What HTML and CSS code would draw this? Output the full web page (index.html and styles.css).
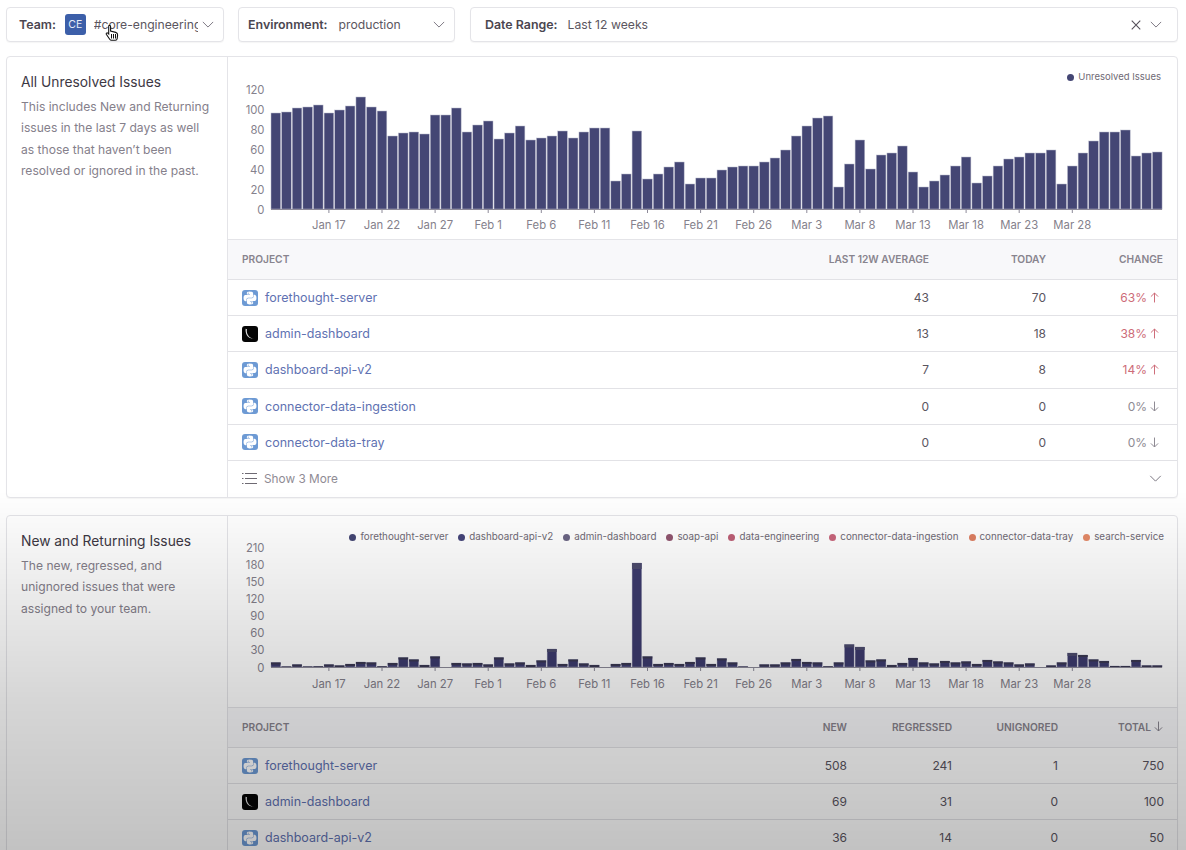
FILE: index.html
```html
<!DOCTYPE html>
<html lang="en">
<head>
<meta charset="utf-8">
<title>Team Insights</title>
<link rel="stylesheet" href="styles.css">
</head>
<body>
<svg class="defs" width="0" height="0" aria-hidden="true">
  <symbol id="chev" viewBox="0 0 14 8"><path d="M1 1l6 6 6-6" fill="none" stroke="currentColor" stroke-width="1.1"/></symbol>
  <symbol id="up" viewBox="0 0 10 12"><path d="M5 11.500V1M1 5l4-4 4 4" fill="none" stroke="currentColor" stroke-width="1.100"/></symbol>
  <symbol id="down" viewBox="0 0 10 12"><path d="M5 .5V11M1 7l4 4 4-4" fill="none" stroke="currentColor" stroke-width="1.100"/></symbol>
  <symbol id="py" viewBox="0 0 24 24">
    <rect width="24" height="24" rx="4.500" fill="#6d9ad4"/>
    <g transform="translate(2.400 2.400) scale(.8)">
      <path fill="#fff" d="M14.250.18l.9.2.73.26.59.3.45.32.34.34.25.34.16.33.1.3.04.26.02.2-.01.13V8.500l-.05.63-.13.55-.21.46-.26.38-.3.31-.33.25-.35.19-.35.14-.33.1-.3.07-.26.04-.21.02H8.770l-.69.05-.59.14-.5.22-.41.27-.33.32-.27.35-.2.36-.15.37-.1.35-.07.32-.04.27-.02.21v3.060H3.170l-.21-.03-.28-.07-.32-.12-.35-.18-.36-.26-.36-.36-.35-.46-.32-.59-.28-.73-.21-.88-.14-1.050-.05-1.230.06-1.220.16-1.040.24-.87.32-.71.36-.57.4-.44.42-.33.42-.24.4-.16.36-.1.32-.05.24-.01h.16l.06.01h8.160v-.83H6.180l-.01-2.750-.02-.37.05-.34.11-.31.17-.28.25-.26.31-.23.38-.2.44-.18.51-.15.58-.12.64-.1.71-.06.77-.04.84-.02 1.270.05zm-6.300 1.980l-.23.33-.08.41.08.41.23.34.33.22.41.09.41-.09.33-.22.23-.34.08-.41-.08-.41-.23-.33-.33-.22-.41-.09-.41.09zm13.090 3.950l.28.06.32.12.35.18.36.27.36.35.35.47.32.59.28.73.21.88.14 1.040.05 1.230-.06 1.230-.16 1.040-.24.86-.32.71-.36.57-.4.45-.42.33-.42.24-.4.16-.36.09-.32.05-.24.02-.16-.01h-8.220v.82h5.840l.01 2.760.02.36-.05.34-.11.31-.17.29-.25.25-.31.24-.38.2-.44.17-.51.15-.58.13-.64.09-.71.07-.77.04-.84.01-1.270-.04-1.070-.14-.9-.2-.73-.25-.59-.3-.45-.33-.34-.34-.25-.34-.16-.33-.1-.3-.04-.25-.02-.2.01-.13v-5.340l.05-.64.13-.54.21-.46.26-.38.3-.32.33-.24.35-.2.35-.14.33-.1.3-.06.26-.04.21-.02.13-.01h5.840l.69-.05.59-.14.5-.21.41-.28.33-.32.27-.35.2-.36.15-.36.1-.35.07-.32.04-.28.02-.21V6.070h2.090l.14.01zm-6.470 14.250l-.23.33-.08.41.08.41.23.33.33.23.41.08.41-.08.33-.23.23-.33.08-.41-.08-.41-.23-.33-.33-.23-.41-.08-.41.08z"/>
    </g>
  </symbol>
  <symbol id="nx" viewBox="0 0 16 16">
    <rect width="16" height="16" rx="3" fill="#050505"/>
    <path d="M3.600 2.800c-.2 2.300.2 4.400 1.100 6.200 1.100 2.200 3.400 3.800 7.800 3.900-3.400-.6-5.400-1.800-6.500-4C5 7.300 4.500 5.200 5 3.200z" fill="#e4e4e4"/>
  </symbol>
</svg>

<main class="page">
  <div class="filters">
    <div class="filter filter-team">
      <span class="filter-label">Team:</span>
      <span class="badge">CE</span>
      <span class="filter-value clip">#core-engineering</span>
      <svg class="chev"><use href="#chev"/></svg>
    </div>
    <div class="filter filter-env">
      <span class="filter-label">Environment:</span>
      <span class="filter-value grow">production</span>
      <svg class="chev"><use href="#chev"/></svg>
    </div>
    <div class="filter filter-date">
      <span class="filter-label">Date Range:</span>
      <span class="filter-value grow">Last 12 weeks</span>
      <svg class="close" viewBox="0 0 11 11"><path d="M.8.8l9.400 9.400M10.200.8L.8 10.200" fill="none" stroke="currentColor" stroke-width="1.200"/></svg>
      <svg class="chev"><use href="#chev"/></svg>
    </div>
  </div>

  <section class="panel panel-one">
    <aside class="side">
      <h2>All Unresolved Issues</h2>
      <p>This includes New and Returning issues in the last 7 days as well as those that haven’t been resolved or ignored in the past.</p>
    </aside>
    <div class="body">
      <div class="chart chart-one">
        <div class="legend">
          <span class="key"><i class="dot c0"></i>Unresolved Issues</span>
        </div>
        <svg class="plot" id="plot-one" width="950" height="163"></svg>
      </div>
      <div class="table table-change">
        <div class="row head"><span>Project</span><span>Last 12w Average</span><span>Today</span><span>Change</span></div>
        <div class="row"><a class="project"><svg class="pi"><use href="#py"/></svg>forethought-server</a><span>43</span><span>70</span><span class="change bad">63%<svg class="arrow"><use href="#up"/></svg></span></div>
        <div class="row"><a class="project"><svg class="pi"><use href="#nx"/></svg>admin-dashboard</a><span>13</span><span>18</span><span class="change bad">38%<svg class="arrow"><use href="#up"/></svg></span></div>
        <div class="row"><a class="project"><svg class="pi"><use href="#py"/></svg>dashboard-api-v2</a><span>7</span><span>8</span><span class="change bad">14%<svg class="arrow"><use href="#up"/></svg></span></div>
        <div class="row"><a class="project"><svg class="pi"><use href="#py"/></svg>connector-data-ingestion</a><span>0</span><span>0</span><span class="change">0%<svg class="arrow"><use href="#down"/></svg></span></div>
        <div class="row"><a class="project"><svg class="pi"><use href="#py"/></svg>connector-data-tray</a><span>0</span><span>0</span><span class="change">0%<svg class="arrow"><use href="#down"/></svg></span></div>
        <div class="more">
          <svg class="list" viewBox="0 0 15 13"><path d="M3 1.500h12M3 6.500h12M3 11.500h12M0 1.500h1.500M0 6.500h1.500M0 11.500h1.500" fill="none" stroke="currentColor" stroke-width="1"/></svg>
          <span class="more-text">Show 3 More</span>
          <svg class="chev"><use href="#chev"/></svg>
        </div>
      </div>
    </div>
  </section>

  <section class="panel panel-two">
    <aside class="side">
      <h2>New and Returning Issues</h2>
      <p>The new, regressed, and unignored issues that were assigned to your team.</p>
    </aside>
    <div class="body">
      <div class="chart chart-two">
        <div class="legend">
          <span class="key"><i class="dot c1"></i>forethought-server</span>
          <span class="key"><i class="dot c2"></i>dashboard-api-v2</span>
          <span class="key"><i class="dot c3"></i>admin-dashboard</span>
          <span class="key"><i class="dot c4"></i>soap-api</span>
          <span class="key"><i class="dot c5"></i>data-engineering</span>
          <span class="key"><i class="dot c6"></i>connector-data-ingestion</span>
          <span class="key"><i class="dot c7"></i>connector-data-tray</span>
          <span class="key"><i class="dot c8"></i>search-service</span>
        </div>
        <svg class="plot" id="plot-two" width="950" height="171"></svg>
      </div>
      <div class="table table-totals">
        <div class="row head"><span>Project</span><span>New</span><span>Regressed</span><span>Unignored</span><span class="total">Total<svg class="arrow"><use href="#down"/></svg></span></div>
        <div class="row"><a class="project"><svg class="pi"><use href="#py"/></svg>forethought-server</a><span>508</span><span>241</span><span>1</span><span>750</span></div>
        <div class="row"><a class="project"><svg class="pi"><use href="#nx"/></svg>admin-dashboard</a><span>69</span><span>31</span><span>0</span><span>100</span></div>
        <div class="row"><a class="project"><svg class="pi"><use href="#py"/></svg>dashboard-api-v2</a><span>36</span><span>14</span><span>0</span><span>50</span></div>
      </div>
    </div>
  </section>
</main>

<div class="fade"></div>

<svg class="cursor" viewBox="0 0 14 18" aria-hidden="true">
  <path d="M4.200 1.200c.9 0 1.400.6 1.400 1.500v4.400l5.100 1.300c1.300.4 2 1.200 1.900 2.500l-.4 3.600c-.1 1-.8 1.800-1.900 1.800H6.500c-.8 0-1.300-.3-1.800-1L1.300 10.200c-.5-.8.600-1.900 1.500-1.100l.9.900V2.700c0-.9.100-1.500.5-1.500z" fill="#fff" stroke="#111" stroke-width="1.100"/>
  <path d="M6.500 10v4.500M8.500 10v4.500M10.500 10v4.500" stroke="#111" stroke-width="1"/>
</svg>

<script src="charts.js"></script>
</body>
</html>
```
FILE: styles.css
```css
* { box-sizing: border-box; }
html, body { margin: 0; height: 850px; overflow: hidden; background: #fff; }
body {
  font-family: Inter, "Noto Sans", "Liberation Sans", sans-serif;
  font-size: 12.5px;
  color: #4a4452;
}
.defs { position: absolute; }

.page { padding: 7px 8px 0 6px; display: flex; flex-direction: column; }

.filters { display: flex; gap: 14px; margin-bottom: 14px; }
.filter {
  height: 35px;
  display: flex;
  align-items: center;
  border: 1px solid #e4e4e8;
  border-radius: 4px;
  box-shadow: 0 1px 1px rgba(0,0,0,.04);
  background: #fff;
  padding: 0 9px 0 12px;
}
.filter-team { width: 218px; }
.filter-env { width: 217px; padding-left: 9px; }
.filter-date { flex: 1; margin-left: 1px; padding-left: 14px; padding-right: 15px; }
.filter-label { font-weight: 600; color: #4b4650; font-size: 12.4px; }
.filter-value { color: #5b5660; font-size: 12.2px; }
.grow { flex: 1; margin-left: 11px; }
.filter-date .grow { margin-left: 10px; }
.clip { width: 105px; white-space: nowrap; overflow: hidden; margin-left: 8px; }
.badge {
  width: 21px; height: 21px; margin-left: 9px;
  background: #3c5fa9; color: #e6ecf7; border-radius: 3px;
  display: flex; align-items: center; justify-content: center;
  font-size: 10.5px;
}
.chev { width: 12px; height: 7px; color: #77727d; flex: none; margin-left: 4px; }
.close { width: 10px; height: 10px; color: #55505a; margin-right: 5px; }

.panel {
  display: flex;
  border: 1px solid #e4e4e8;
  border-radius: 4px;
  box-shadow: 0 1px 1px rgba(0,0,0,.04);
  background: #fff;
}
.panel-one { height: 442px; margin-bottom: 17px; }
.panel-two { height: 400px; }

.side { width: 221px; flex: none; border-right: 1px solid #e4e4e8; padding: 17px 14px 0 14px; }
.side h2 { margin: 0; font-size: 13.8px; font-weight: 400; line-height: 16px; color: #3d3844; }
.side p { margin: 6px 0 0; font-size: 12.1px; line-height: 21.3px; color: #85808b; }

.body { flex: 1; min-width: 0; display: flex; flex-direction: column; }
.chart { border-bottom: 1px solid #e4e4e8; }
.chart-one { padding-top: 13px; }
.chart-two { padding-top: 14px; }
.legend {
  height: 14px;
  margin-bottom: -8px;
  display: flex; justify-content: flex-end; gap: 10px;
  padding-right: 13px;
  font-size: 9.8px; color: #6f6a75; line-height: 14px;
}
.chart-one .legend { padding-right: 16px; font-size: 9.5px; }
.key { display: flex; align-items: center; gap: 4px; white-space: nowrap; }
.dot { width: 7px; height: 7px; border-radius: 50%; display: block; }
.c0, .c1 { background: #444674; }
.c2 { background: #45457a; }
.c3 { background: #6b6584; }
.c4 { background: #91566f; }
.c5 { background: #bd5f76; }
.c6 { background: #c9667c; }
.c7 { background: #dd7f62; }
.c8 { background: #e58a68; }

.plot { display: block; }
.bar { fill: #444674; stroke: #b9bacb; stroke-width: .5; }
.bar-two { fill: #3d3b6e; stroke: #a9a9bd; stroke-width: .4; }
.bar-top { fill: #3a3852; }
.bar-top-tall { fill: #4d4c6e; }
.axis { stroke: #8d8a99; stroke-width: 1; }
.tick-label, .y-label { font-size: 11.3px; fill: #85818c; font-family: Inter, "Noto Sans", sans-serif; }
.tick-label { text-anchor: middle; }
.y-label { text-anchor: end; }

.row {
  display: grid;
  align-items: center;
  height: 36.2px;
  padding: 0 14px;
  border-bottom: 1px solid #e2e2e6;
  text-align: right;
  font-size: 12px;
  color: #5a555f;
}
.table-change .row { grid-template-columns: 1fr 200px 117px 117px; }
.table-totals .row { grid-template-columns: 1fr 106px 105px 106px 106px; padding-right: 13px; }
.row.head {
  height: 40px;
  padding-bottom: 2px;
  background: #f8f8fa;
  font-size: 10.2px;
  font-weight: 600;
  text-transform: uppercase;
  color: #88848e;
}
.row.head > :first-child { text-align: left; }
.project { display: flex; align-items: center; gap: 7px; color: #5f72b2; text-align: left; white-space: nowrap; font-size: 12.5px; }
.pi { width: 16px; height: 16px; flex: none; }
.change { color: #8e8a93; display: flex; justify-content: flex-end; align-items: center; gap: 3px; }
.change.bad { color: #cd6b78; }
.change .arrow { margin-right: 4px; }
.arrow { width: 9px; height: 11px; flex: none; }
.total { display: flex; justify-content: flex-end; align-items: center; gap: 3px; }
.total .arrow { margin-right: 1px; }

.more { height: 36px; display: flex; align-items: center; padding: 0 15px 0 14px; color: #8f8b94; font-size: 11.8px; }
.list { width: 15px; height: 13px; color: #6e6a73; margin-right: 7px; }
.more-text { flex: 1; }
.more .chev { width: 13px; height: 7px; }

.fade {
  position: fixed; inset: 0; pointer-events: none;
  background: linear-gradient(to bottom, rgba(0,0,0,0) 490px, rgba(0,0,0,.03) 530px, rgba(0,0,0,.16) 700px, rgba(0,0,0,.24) 850px);
}
.cursor { position: fixed; left: 105px; top: 24px; width: 14px; height: 18px; }
```
FILE: charts.js
```js
var NS = 'http://www.w3.org/2000/svg';
var LEFT = 43, PITCH = 10.62, BAR = 9.6;
var LABELS = ['Jan 17','Jan 22','Jan 27','Feb 1','Feb 6','Feb 11','Feb 16','Feb 21','Feb 26','Mar 3','Mar 8','Mar 13','Mar 18','Mar 23','Mar 28'];

var unresolved = [96,97,101,102,104,96,99,103,112,102,98,73,76,77,75,94,94,101,77,84,88,70,76,83,69,71,73,78,71,77,81,81,28,35,78,30,35,42,47,25,31,31,39,42,43,43,47,51,59,73,83,91,93,22,45,69,40,54,56,63,37,22,28,34,43,52,26,33,43,50,52,56,56,59,25,43,56,68,77,77,79,53,56,57];
var issuesPx = [4.5,.5,2.5,.5,.7,2.5,1.5,3,5,4.5,.7,4,9.5,7.5,2,10.5,0,4,3.5,4,2.5,9.5,3.5,4.5,2,6.5,18,3,7.5,3.5,2,0,3,4,104,10.5,3,4,3,5,9.5,3,8.5,4.5,.5,0,2.5,2.5,4.5,8,5,4.5,.7,4.5,22.5,20,6.5,7.5,2,4,9,4.5,3.5,6,4.5,5.5,3,7,5.5,4.5,2.5,3.5,0,1.5,4.5,14,12,7.5,6,1,1,7,1.5,1.5];

function el(name, attrs, text) {
  var n = document.createElementNS(NS, name);
  for (var k in attrs) n.setAttribute(k, attrs[k]);
  if (text !== undefined) n.textContent = text;
  return n;
}

function axis(svg, base, labelY, yTicks) {
  yTicks.forEach(function (t) {
    svg.appendChild(el('text', { x: 36.5, y: t.y + 4.5, 'class': 'y-label' }, t.label));
  });
  svg.appendChild(el('line', { x1: LEFT, x2: LEFT + 84 * PITCH - 1, y1: base + .5, y2: base + .5, 'class': 'axis' }));
  LABELS.forEach(function (label, i) {
    var x = LEFT + (5 + i * 5) * PITCH + BAR / 2;
    svg.appendChild(el('line', { x1: x, x2: x, y1: base + .5, y2: base + 4, 'class': 'axis' }));
    svg.appendChild(el('text', { x: x, y: labelY, 'class': 'tick-label' }, label));
  });
}

function drawOne() {
  var svg = document.getElementById('plot-one');
  var base = 133;
  var ticks = [0, 20, 40, 60, 80, 100, 120].map(function (v) { return { label: v, y: base - v }; });
  unresolved.forEach(function (v, i) {
    svg.appendChild(el('rect', { x: LEFT + i * PITCH, y: base - v, width: BAR, height: v, 'class': 'bar' }));
  });
  axis(svg, base, 153, ticks);
}

function drawTwo() {
  var svg = document.getElementById('plot-two');
  var base = 131;
  var ticks = [0, 30, 60, 90, 120, 150, 180, 210].map(function (v) { return { label: v, y: base - v * .57 }; });
  issuesPx.forEach(function (h, i) {
    if (!h) return;
    var x = LEFT + i * PITCH;
    svg.appendChild(el('rect', { x: x, y: base - h, width: BAR, height: h, 'class': 'bar-two' }));
    var tall = h > 12;
    svg.appendChild(el('rect', {
      x: x, y: base - h, width: BAR,
      height: Math.min(h, h > 50 ? 6 : tall ? 3 : 2),
      'class': tall ? 'bar-top-tall' : 'bar-top'
    }));
  });
  axis(svg, base, 152, ticks);
}

drawOne();
drawTwo();
```
